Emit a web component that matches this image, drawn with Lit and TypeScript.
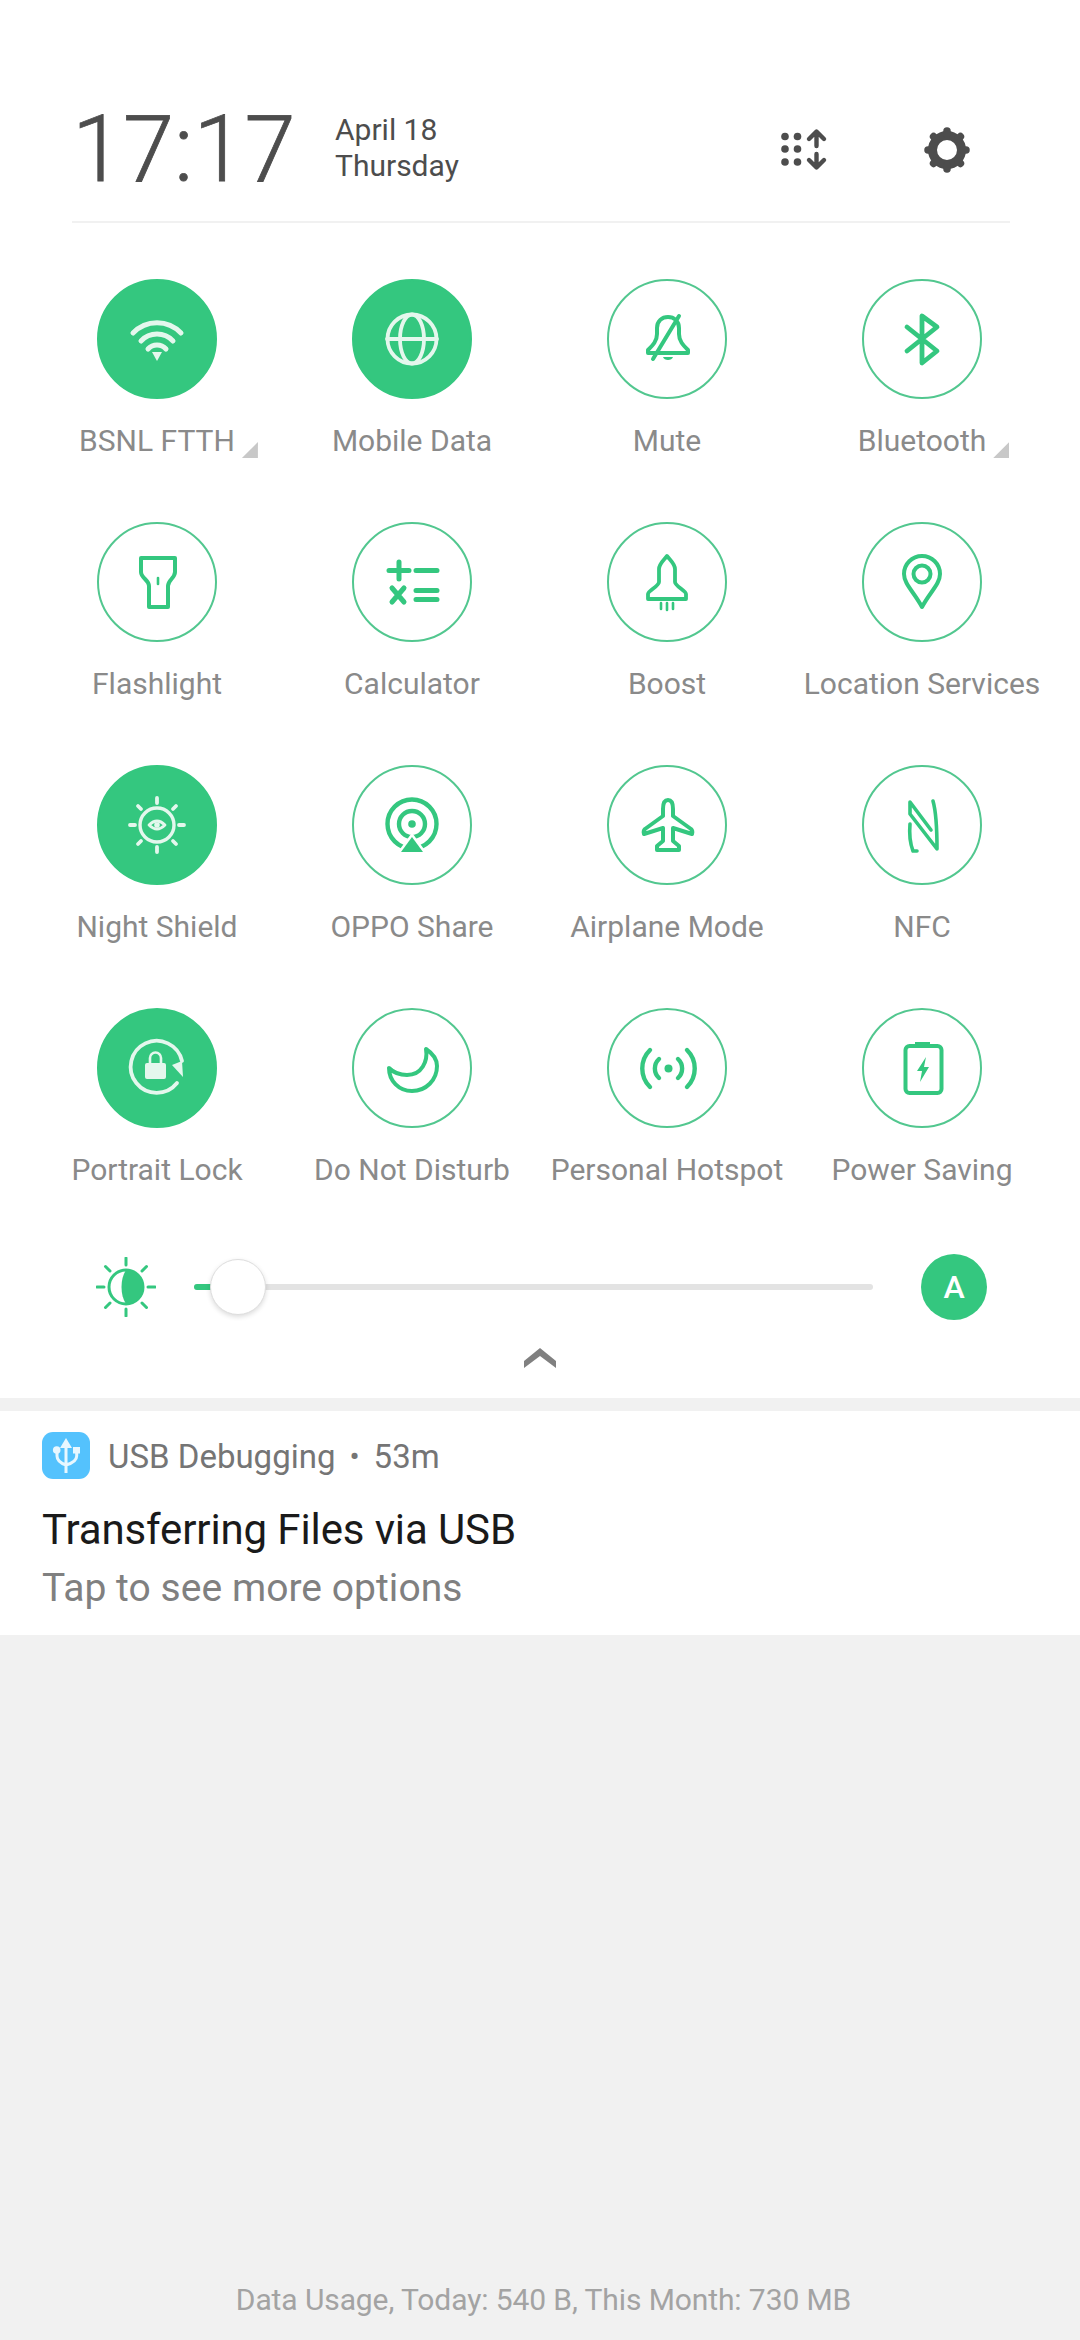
import { LitElement, html, css, svg } from "lit";
import { customElement } from "lit/decorators.js";

const I: Record<string, any> = {
  wifi: svg`<path class="s" stroke-width="5" stroke-linecap="butt" d="M36 54A33 33 0 0 1 84 54M44 62A22 22 0 0 1 76 62M51 70A12 12 0 0 1 69 70"/><path class="f" d="M55 73H65L60 82Z"/>`,
  globe: svg`<g class="s" stroke-width="3.8"><circle cx="60" cy="60" r="24.5"/><ellipse cx="60" cy="60" rx="12" ry="24.5"/><path d="M35 60H85"/></g>`,
  bell: svg`<path class="s" stroke-width="4" d="M41 74V71C46 66 50 62 50 55V49C50 42 55 38 61 38C67 38 72 42 72 49V55C72 62 76 66 81 71V74ZM72 37L46 80"/><path class="f" d="M56 78H66C65 82 57 82 56 78Z"/>`,
  bt: svg`<path class="s" stroke-width="4.8" d="M45 72L75 48L60 37V84L75 72L45 48"/>`,
  flash: svg`<path class="s" stroke-width="4" d="M44 36H78V50C78 56 71 58 71 64V85H52V64C52 58 44 56 44 50Z"/><path class="s" stroke-width="2.6" d="M61 56V62"/>`,
  calc: svg`<path class="s" stroke-width="5" stroke-linecap="butt" d="M37 48.5H57M47 40V57M64 48.5H85M40 66L52 80M52 66L40 80M64 68.5H85M64 77.5H85"/>`,
  boost: svg`<path class="s" stroke-width="3.8" d="M41 77V72C41 69 52 64 52 60V47C52 42 57 38 60 34C63 38 68 42 68 47V60C68 64 79 69 79 72V77ZM41 77H79"/><path class="s" stroke-width="2.6" d="M54 81V87M60 81V88M66 81V87"/>`,
  loc: svg`<path class="s" stroke-width="4" d="M60 85C52 70 42 62 42 52A18 18 0 1 1 78 52C78 62 68 70 60 85Z"/><circle class="s" stroke-width="4" cx="60" cy="52" r="8.5"/>`,
  night: svg`<g class="s"><circle cx="60" cy="60" r="17" stroke-width="3.4"/><path stroke-width="3.8" d="M60 33V38M60 82V87M33 60H38M82 60H87M41 41L44 44M79 41L76 44M41 79L44 76M79 79L76 76"/><path stroke-width="2.8" d="M52 60Q60 52 68 60Q60 68 52 60Z"/></g><circle class="f" cx="60" cy="60" r="2.8"/>`,
  share: svg`<g class="s" stroke-width="4.4" stroke-linecap="butt"><circle cx="60" cy="59" r="24.5"/><circle cx="60" cy="59" r="13"/></g><circle class="f" cx="60" cy="59" r="3.8"/><path fill="#fff" stroke="#fff" stroke-width="5" d="M60 72L49 87H71Z"/><path class="f" d="M60 72L49 87H71Z"/>`,
  plane: svg`<path class="s" stroke-width="4" d="M61 35C57 35 56 39 56 44V51L38 64Q36 66 37 69L56 63V76L50 81V85H72V81L66 76V63L85 69Q86 66 84 64L66 51V44C66 39 65 35 61 35Z"/>`,
  nfc: svg`<path class="s" stroke-width="3.6" stroke-linejoin="miter" stroke-linecap="butt" d="M71 36C75 50 75 72 75 84L48 49V37L69 65M48 59C47 70 48 78 51 86H55"/>`,
  lock: svg`<path class="s" stroke-width="3.8" stroke-linecap="butt" d="M80 75A26 26 0 1 1 85 53"/><path class="f" d="M75 57L85 53L86 69Z"/><rect class="f" x="48" y="55" width="21" height="16" rx="2"/><path class="s" stroke-width="2.6" d="M53 56V50A5.5 5.5 0 0 1 64 50V56"/>`,
  moon: svg`<path class="s" stroke-width="4" d="M74 41C76 53 70 67 55 67C48 67 42 65 37 60C37 73 47 83 60 83C74 83 85 72 85 58C85 50 80 45 74 41Z"/>`,
  hot: svg`<g class="s" stroke-width="4.4" stroke-linecap="butt"><path d="M43 42A26 26 0 0 0 43 79M80 42A26 26 0 0 1 80 79M52 51A13 13 0 0 0 52 70M71 51A13 13 0 0 1 71 70"/></g><circle class="f" cx="61.5" cy="60.5" r="4"/>`,
  bat: svg`<rect class="s" stroke-width="4" x="43.5" y="38" width="36" height="47" rx="4"/><rect class="f" x="53" y="34" width="15" height="5"/><path class="f" d="M64 49L55 63H60L58 74L67 59H62Z"/>`,
};

type T = { n: string; i: string; on?: boolean; tri?: boolean };
const tiles: T[] = [
  { n: "BSNL FTTH", i: "wifi", on: true, tri: true },
  { n: "Mobile Data", i: "globe", on: true },
  { n: "Mute", i: "bell" },
  { n: "Bluetooth", i: "bt", tri: true },
  { n: "Flashlight", i: "flash" },
  { n: "Calculator", i: "calc" },
  { n: "Boost", i: "boost" },
  { n: "Location Services", i: "loc" },
  { n: "Night Shield", i: "night", on: true },
  { n: "OPPO Share", i: "share" },
  { n: "Airplane Mode", i: "plane" },
  { n: "NFC", i: "nfc" },
  { n: "Portrait Lock", i: "lock", on: true },
  { n: "Do Not Disturb", i: "moon" },
  { n: "Personal Hotspot", i: "hot" },
  { n: "Power Saving", i: "bat" },
];

@customElement("app-root")
export class AppRoot extends LitElement {
  static styles = css`
    :host { display: flex; flex-direction: column; width: 1080px; height: 2340px; background: #f1f1f1; font-family: Roboto, "Liberation Sans", sans-serif; overflow: hidden; }
    .panel { background: #fff; height: 1398px; flex: none; }
    .head { margin: 0 70px 0 72px; height: 143px; padding-top: 78px; box-sizing: content-box; display: flex; align-items: center; border-bottom: 2px solid #f1f1f1; color: #4d4d4d; }
    .time { font-size: 92px; font-weight: 300; line-height: 100px; width: 263px; flex: none; -webkit-text-stroke: 0.8px #4d4d4d; }
    .date { font-size: 30px; line-height: 36px; margin-top: -3px; }
    .tools { margin-left: auto; display: flex; gap: 82px; padding-right: 33px; }
    .tools svg { display: block; width: 60px; height: 60px; fill: #4d4d4d; stroke: #4d4d4d; }
    .grid { display: grid; grid-template-columns: repeat(4, 255px); grid-auto-rows: 243px; padding: 56px 0 0 29.5px; }
    .cell { display: flex; flex-direction: column; align-items: center; }
    .dot { width: 120px; height: 120px; border-radius: 50%; box-sizing: border-box; border: 2px solid #52c78f; color: #34c77f; display: flex; align-items: center; justify-content: center; flex: none; }
    .dot.on { background: #34c77f; border-color: #34c77f; color: #e4f7ed; }
    .dot svg { width: 120px; height: 120px; flex: none; }
    .s { fill: none; stroke: currentColor; stroke-linecap: round; stroke-linejoin: round; }
    .f { fill: currentColor; }
    .lab { position: relative; margin-top: 22px; font-size: 30px; line-height: 40px; color: #8a8a8a; white-space: nowrap; }
    .tri { position: absolute; left: calc(100% + 7px); bottom: 3px; width: 16px; height: 16px; background: #c8c8c8; clip-path: polygon(100% 0, 100% 100%, 0 100%); }
    .bright { display: flex; align-items: center; height: 66px; margin-top: 3px; padding-left: 96px; }
    .sun { width: 60px; height: 60px; flex: none; color: #34c77f; }
    .track { position: relative; margin-left: 38px; width: 679px; height: 6px; border-radius: 3px; background: #e3e3e3; flex: none; }
    .fill { width: 24px; height: 6px; border-radius: 3px 0 0 3px; background: #34c77f; }
    .thumb { position: absolute; left: 16px; top: -25px; width: 56px; height: 56px; border-radius: 50%; background: #fff; box-sizing: border-box; border: 1px solid #dedede; box-shadow: 0 2px 5px rgba(0,0,0,.14); }
    .auto { margin-left: 48px; width: 66px; height: 66px; border-radius: 50%; background: #34c77f; color: #fff; font-size: 32px; font-weight: 500; display: flex; align-items: center; justify-content: center; flex: none; }
    .chev { display: block; margin: 26px auto 0; width: 40px; height: 24px; }
    .note { margin-top: 13px; background: #fff; height: 224px; box-sizing: border-box; padding: 21px 42px 0; flex: none; }
    .src { display: flex; align-items: center; height: 48px; font-size: 33px; color: #757575; }
    .src svg { width: 48px; height: 48px; margin-right: 18px; flex: none; }
    .sep { margin: 0 14px; font-size: 30px; }
    .title { margin-top: 22px; font-size: 42px; line-height: 56px; color: #1a1a1a; letter-spacing: -0.12px; }
    .body { margin-top: 2px; font-size: 39px; line-height: 56px; color: #808080; letter-spacing: 0.05px; }
    .foot { margin-top: auto; padding: 0 0 20px 7px; text-align: center; font-size: 30px; line-height: 40px; color: #a3a3a3; letter-spacing: -0.1px; }
  `;

  render() {
    const gear = Array.from({ length: 8 }, (_, k) => svg`<path transform="rotate(${k * 45} 30 30)" d="M30 11V14" stroke-width="7.5" stroke-linecap="round"/>`);
    return html`
      <section class="panel">
        <header class="head">
          <div class="time">17:17</div>
          <div class="date">April 18<br />Thursday</div>
          <div class="tools">
            <svg viewBox="0 0 60 60">
              <g stroke="none">
                <circle cx="10" cy="16.5" r="3.8" /><circle cx="22.5" cy="16.5" r="3.8" />
                <circle cx="10" cy="29" r="3.8" /><circle cx="22.5" cy="29" r="3.8" />
                <circle cx="10" cy="42" r="3.8" /><circle cx="22.5" cy="42" r="3.8" />
              </g>
              <path fill="none" stroke-width="4.4" stroke-linecap="round" stroke-linejoin="round" d="M41.5 12V26M34 19L41.5 11.5L49 19M41.5 34V47M34 40L41.5 47.5L49 40" />
            </svg>
            <svg viewBox="0 0 60 60">
              <circle cx="30" cy="30" r="14.5" fill="none" stroke-width="9" />
              ${gear}
            </svg>
          </div>
        </header>
        <div class="grid">
          ${tiles.map(
            (t) => html`<div class="cell">
              <div class="dot ${t.on ? "on" : ""}"><svg viewBox="0 0 120 120">${I[t.i]}</svg></div>
              <div class="lab">${t.n}${t.tri ? html`<span class="tri"></span>` : ""}</div>
            </div>`
          )}
        </div>
        <div class="bright">
          <svg class="sun" viewBox="-30 -30 60 60">
            <circle class="s" r="17" stroke-width="3" />
            <path class="f" d="M0 -17A17 17 0 0 1 0 17C-6 8 -6 -8 0 -17Z" />
            <path class="s" stroke-width="3" d="M0 -29V-22M0 22V29M-29 0H-22M22 0H29M-20.5 -20.5L-16 -16M20.5 -20.5L16 -16M-20.5 20.5L-16 16M20.5 20.5L16 16" />
          </svg>
          <div class="track"><div class="fill"></div><div class="thumb"></div></div>
          <div class="auto">A</div>
        </div>
        <svg class="chev" viewBox="0 0 40 24">
          <path fill="#808080" d="M20 2L36 15V22L20 10L4 22V15Z" />
        </svg>
      </section>
      <section class="note">
        <div class="src">
          <svg viewBox="0 0 48 48">
            <rect width="48" height="47" rx="11" fill="#54c2fd" />
            <path fill="#e8f7ff" d="M24 6L30 16H18Z" />
            <circle cx="14.7" cy="18" r="3.8" fill="#e8f7ff" />
            <rect x="31" y="15" width="7" height="6.5" fill="#e8f7ff" />
            <path fill="none" stroke="#e8f7ff" stroke-width="3" d="M24 14V41M15 20V24Q15 30 24 33M34.7 20V24Q34.7 30 24 33" />
          </svg>
          USB Debugging<span class="sep">•</span>53m
        </div>
        <div class="title">Transferring Files via USB</div>
        <div class="body">Tap to see more options</div>
      </section>
      <footer class="foot">Data Usage, Today: 540 B, This Month: 730 MB</footer>
    `;
  }
}
